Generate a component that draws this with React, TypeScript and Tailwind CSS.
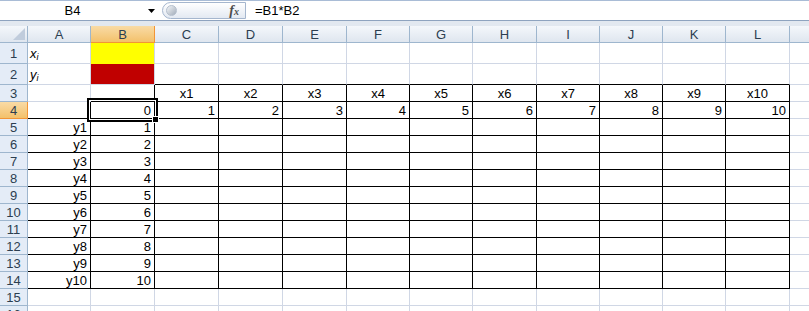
import React from "react";

const COLS = ["A", "B", "C", "D", "E", "F", "G", "H", "I", "J", "K", "L"];
const WIDTHS = [63, 64, 64, 64, 64, 63, 63, 64, 63, 63, 63, 64];
const ROWS = Array.from({ length: 16 }, (_, i) => i + 1);

const GRID_R = "border-r-[#d0d7e5]";
const GRID_B = "border-b-[#d0d7e5]";

/** which cells carry the thin black borders */
function bordered(r: number, c: number) {
  if (c < 0 || c > 11) return false;
  if ((r === 3 || r === 4) && c >= 2) return true;
  if (r === 4 && c === 1) return true;
  if (r >= 5 && r <= 14) return true;
  return false;
}

function content(r: number, c: number): { text: React.ReactNode; align: string } | null {
  if (r === 1 && c === 0)
    return {
      text: (
        <span className="italic">
          x<sub className="text-[9px]">i</sub>
        </span>
      ),
      align: "justify-start pl-[2px]",
    };
  if (r === 2 && c === 0)
    return {
      text: (
        <span className="italic">
          y<sub className="text-[9px]">i</sub>
        </span>
      ),
      align: "justify-start pl-[2px]",
    };
  if (r === 3 && c >= 2) return { text: `x${c - 1}`, align: "justify-center" };
  if (r === 4 && c === 1) return { text: "0", align: "justify-end pr-[3px]" };
  if (r === 4 && c >= 2) return { text: String(c - 1), align: "justify-end pr-[3px]" };
  if (r >= 5 && r <= 14 && c === 0) return { text: `y${r - 4}`, align: "justify-end pr-[3px]" };
  if (r >= 5 && r <= 14 && c === 1) return { text: String(r - 4), align: "justify-end pr-[3px]" };
  return null;
}

function FormulaBar() {
  return (
    <div className="h-[21px] flex border-t border-b border-t-[#a9bcd6] border-b-[#8ea3bf] bg-white">
      <div className="w-[145px] flex items-center justify-center text-black">B4</div>
      <div className="w-[17px] flex items-center">
        <svg width="7" height="4" viewBox="0 0 7 4" className="ml-[3px]">
          <polygon points="0,0 7,0 3.5,4" fill="#000" />
        </svg>
      </div>
      <div className="w-[84px] h-[17px] mt-[1px] flex items-center rounded-l-full border border-[#a5b6ce] bg-linear-to-b from-white to-[#e3e9f2]">
        <div className="w-[11px] h-[11px] ml-[3px] rounded-full border border-[#b4bfcd] bg-linear-to-br from-[#f4f6f9] to-[#a3adba]" />
        <span className="ml-auto mr-[6px] font-['Liberation_Serif',serif] italic font-bold text-[14px] leading-none text-[#4d4d4d]">
          f<span className="text-[10px]">x</span>
        </span>
      </div>
      <div className="flex-1 flex items-center pl-[9px] text-black">=B1*B2</div>
    </div>
  );
}

function HeaderRow() {
  return (
    <div className="flex h-[17px]">
      <div className="w-[28px] shrink-0 relative border-r border-b border-[#9eb6ce] bg-linear-to-b from-[#f4f7fb] to-[#dfe6ef]">
        <svg width="12" height="12" viewBox="0 0 12 12" className="absolute right-[2px] bottom-[2px]">
          <polygon points="12,0 12,12 0,12" fill="#c0ccdc" />
        </svg>
      </div>
      {COLS.map((col, i) => (
        <div
          key={col}
          style={{ width: WIDTHS[i] }}
          className={
            col === "B"
              ? "shrink-0 flex items-center justify-center border-r border-b border-[#f29536] bg-linear-to-b from-[#f9dba5] to-[#f3c16a] text-[#2c3e50]"
              : "shrink-0 flex items-center justify-center border-r border-b border-[#9eb6ce] bg-linear-to-b from-[#f4f7fb] to-[#dfe6ef] text-[#2c3e50]"
          }
        >
          {col}
        </div>
      ))}
      <div className="flex-1 border-b border-[#9eb6ce] bg-linear-to-b from-[#f4f7fb] to-[#dfe6ef]" />
    </div>
  );
}

function Cell({ r, c }: { r: number; c: number }) {
  const right = bordered(r, c) || bordered(r, c + 1) ? "border-r-black" : GRID_R;
  let bottom = bordered(r, c) || bordered(r + 1, c) ? "border-b-black" : GRID_B;
  let fill = "";
  if (r === 1 && c === 1) {
    fill = "bg-[#ffff00]";
    bottom = "border-b-[#ffff00]";
  }
  if (r === 2 && c === 1) fill = "bg-[#c00000]";
  const data = content(r, c);
  const active = r === 4 && c === 1;

  return (
    <div
      style={{ width: WIDTHS[c] }}
      className={`shrink-0 flex items-center whitespace-nowrap border-r border-b text-black ${right} ${bottom} ${fill} ${
        active ? "relative" : ""
      } ${data ? data.align : ""}`}
    >
      {data?.text}
      {active && (
        <>
          <div className="absolute -left-[4px] -top-[4px] -right-[4px] -bottom-[4px] border-2 border-black pointer-events-none z-10">
            <div className="absolute inset-0 border border-white" />
          </div>
          <div className="absolute -right-[5px] -bottom-[5px] w-[7px] h-[7px] bg-black border border-white z-20" />
        </>
      )}
    </div>
  );
}

function Row({ r }: { r: number }) {
  const tall = r === 1 || r === 2;
  return (
    <div className={tall ? "flex h-[21px]" : "flex h-[17px]"}>
      <div
        className={
          r === 4
            ? "w-[28px] shrink-0 flex items-center justify-center border-r border-b border-[#f29536] bg-linear-to-b from-[#f9dba5] to-[#f3c16a] text-[#2c3e50]"
            : "w-[28px] shrink-0 flex items-center justify-center border-r border-b border-[#9eb6ce] bg-[#e4ecf7] text-[#2c3e50]"
        }
      >
        {r}
      </div>
      {COLS.map((col, c) => (
        <Cell key={col} r={r} c={c} />
      ))}
      <div className="flex-1 border-b border-b-[#d0d7e5]" />
    </div>
  );
}

export default function App() {
  return (
    <div className="w-[809px] h-[311px] overflow-hidden bg-white font-['Liberation_Sans',Arial,sans-serif] text-[13px] leading-none select-none">
      <FormulaBar />
      <div className="h-[5px] bg-[#e2e8f0]" />
      <HeaderRow />
      {ROWS.map((r) => (
        <Row key={r} r={r} />
      ))}
    </div>
  );
}
